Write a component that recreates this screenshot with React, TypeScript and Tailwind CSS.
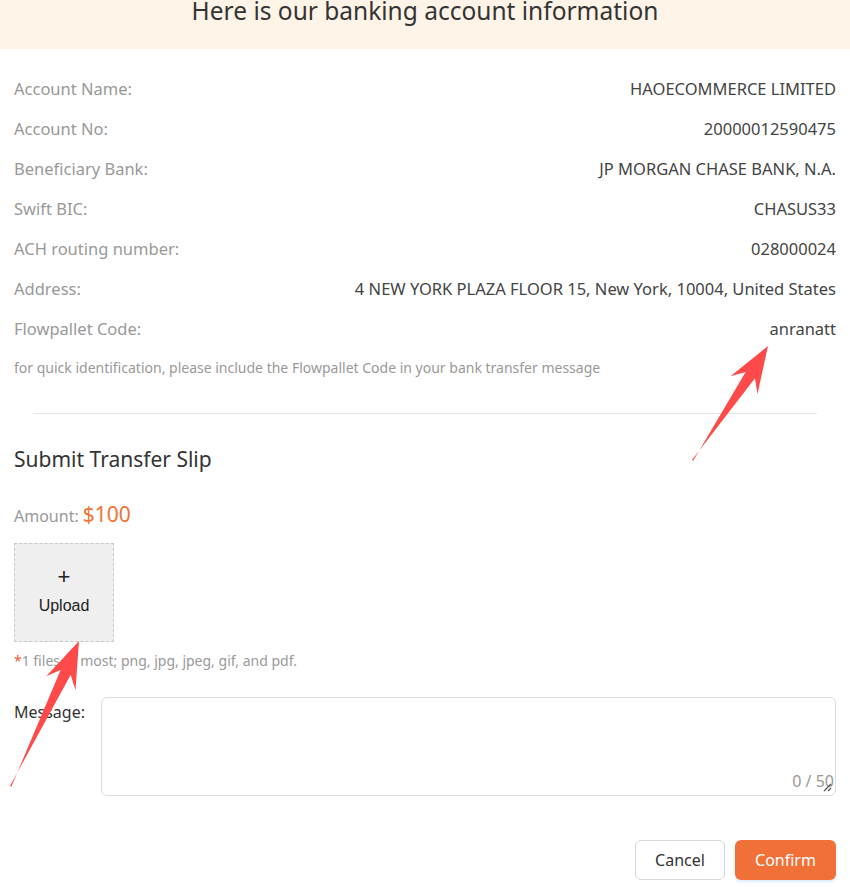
const rows = [
  { label: 'Account Name:', value: 'HAOECOMMERCE LIMITED' },
  { label: 'Account No:', value: '20000012590475' },
  { label: 'Beneficiary Bank:', value: 'JP MORGAN CHASE BANK, N.A.' },
  { label: 'Swift BIC:', value: 'CHASUS33' },
  { label: 'ACH routing number:', value: '028000024' },
  { label: 'Address:', value: '4 NEW YORK PLAZA FLOOR 15, New York, 10004, United States' },
  { label: 'Flowpallet Code:', value: 'anranatt' },
];

// red annotation arrow, tail -> tip
function arrowPoints(tx: number, ty: number, hx: number, hy: number) {
  const dx = hx - tx;
  const dy = hy - ty;
  const len = Math.hypot(dx, dy);
  const ux = dx / len;
  const uy = dy / len;
  const px = -uy;
  const py = ux;
  const headLen = 46;
  const headW = 18;
  const neckW = 7;
  const bx = hx - ux * headLen;
  const by = hy - uy * headLen;
  const nx = hx - ux * (headLen - 12);
  const ny = hy - uy * (headLen - 12);
  const pts = [
    [tx, ty],
    [nx + px * neckW, ny + py * neckW],
    [bx + px * headW, by + py * headW],
    [hx, hy],
    [bx - px * headW * 0.8, by - py * headW * 0.8],
    [nx - px * neckW * 0.6, ny - py * neckW * 0.6],
    [tx + px * 1.5, ty + py * 1.5],
  ];
  return pts.map((p) => p.join(',')).join(' ');
}

export default function App() {
  return (
    <div className="relative w-[850px] h-[887px] overflow-hidden bg-white font-['Noto_Sans',sans-serif]">
      <div className="h-[49px] bg-[#fef3e7] overflow-hidden text-center">
        <h1 className="-mt-[7px] text-[24.5px] leading-[36px] text-[#333]">Here is our banking account information</h1>
      </div>

      <div className="px-[14px] pt-[20px]">
        {rows.map((r) => (
          <div key={r.label} className="flex h-[40px] items-center justify-between text-[16.5px]">
            <span className="text-[#999]">{r.label}</span>
            <span className="text-[#444]">{r.value}</span>
          </div>
        ))}
        <p className="mt-[8px] text-[14px] text-[#999]">
          for quick identification, please include the Flowpallet Code in your bank transfer message
        </p>
      </div>

      <div className="mx-[33px] mt-[35px] h-px bg-[#e6e6e6]" />

      <div className="px-[14px]">
        <h2 className="mt-[30px] text-[21px] leading-[30px] text-[#333]">Submit Transfer Slip</h2>
        <div className="mt-[25px] flex items-baseline gap-[4px]">
          <span className="text-[16px] text-[#999]">Amount:</span>
          <span className="text-[21px] text-[#f07235]">$100</span>
        </div>
        <div className="mt-[12px] flex h-[99px] w-[100px] flex-col items-center justify-center border border-dashed border-[#c8c8c8] bg-[#efefef] font-['Liberation_Sans',sans-serif] text-[#222]">
          <span className="text-[22px] leading-[22px] font-light">+</span>
          <span className="mt-[6px] text-[16px]">Upload</span>
        </div>
        <p className="mt-[8px] text-[14px] text-[#999]">
          <span className="text-[#f05a30]">*</span>1 files at most; png, jpg, jpeg, gif, and pdf.
        </p>

        <div className="mt-[26px] flex">
          <span className="w-[87px] shrink-0 pt-[3px] text-[16px] text-[#333]">Message:</span>
          <div className="relative h-[99px] flex-1 rounded-[6px] border border-[#dcdcdc]">
            <span className="absolute right-[1px] bottom-[2px] text-[16px] text-[#999]">0 / 50</span>
            <svg className="absolute right-[3px] bottom-[3px]" width="10" height="10" viewBox="0 0 10 10">
              <path d="M9 2 L2 9 M9 6 L6 9" stroke="#555" strokeWidth="1.2" />
            </svg>
          </div>
        </div>

        <div className="mt-[44px] flex justify-end gap-[10px]">
          <button className="h-[40px] w-[90px] rounded-[6px] border border-[#d6d6d6] bg-white text-[16px] text-[#333]">
            Cancel
          </button>
          <button className="h-[40px] w-[101px] rounded-[6px] bg-[#f07038] text-[16px] text-white shadow-[0_2px_3px_rgba(30,120,255,0.15)]">
            Confirm
          </button>
        </div>
      </div>

      <svg className="pointer-events-none absolute inset-0" width="850" height="887">
        <polygon points={arrowPoints(692, 460, 768, 346)} fill="#ff4a4a" />
        <polygon points={arrowPoints(10, 786, 79, 641)} fill="#ff4a4a" />
      </svg>
    </div>
  );
}
